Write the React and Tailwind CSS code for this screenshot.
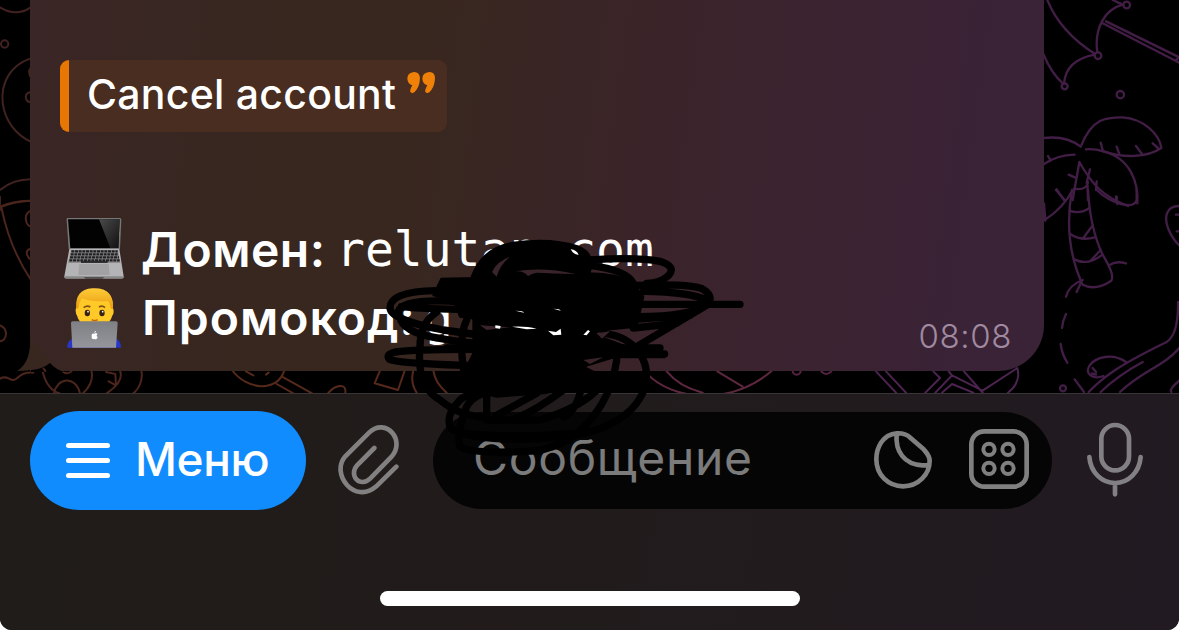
import React from "react";

function Wallpaper() {
  return (
    <svg className="absolute inset-0" width="1179" height="393" viewBox="0 0 1179 393" fill="none" strokeLinecap="round" strokeLinejoin="round">
      {/* left strip */}
      <g transform="scale(0.33333)" stroke="#40221f" strokeWidth="6">
        <path d="M0 22Q48 52 92 22" />
        <circle cx="14" cy="132" r="11" />
        <path d="M92 175C30 196 2 250 8 308C14 362 48 404 92 425M92 205Q84 212 90 228M92 276Q74 280 78 296Q82 308 92 306" />
        <path d="M0 570Q40 538 92 538M0 620Q40 602 92 602M0 590V630" />
      </g>
      <g transform="translate(0 200) scale(0.33333)" stroke="#4c251c" strokeWidth="6">
        <path d="M0 22Q40 4 92 2M4 22C18 90 46 170 92 238M92 32Q74 42 78 60Q80 76 92 80M92 146Q76 150 82 166Q86 176 92 178M0 376Q18 382 18 402Q16 422 0 424" />
        <path d="M0 536C20 524 26 540 40 540C56 538 56 516 100 518M126 500C130 540 150 572 178 580M274 512C282 540 264 568 248 580M162 580C170 534 226 524 240 580M184 512Q204 528 218 510M318 516L346 522L348 556L326 544M360 512C368 532 356 556 320 580M424 512C430 540 416 568 400 580" />
      </g>
      <g transform="translate(0 340) scale(0.33333)" stroke="#56291b" strokeWidth="6">
        <path d="M696 90C740 150 830 158 852 94M738 94L760 106M798 104L806 98M830 132L880 160M846 110L936 160M984 160C1004 136 1040 126 1036 158M1140 92L1124 130L1194 150L1214 92M1240 92Q1230 126 1250 158M1300 92Q1306 130 1340 158" />
      </g>
      {/* lower strip behind the bubble */}
      <g transform="translate(640 360) scale(0.33333)" strokeWidth="6">
        <path stroke="#5e2740" d="M20 40C100 124 270 136 394 34M80 34Q118 80 188 98M232 34L308 80" />
        <circle stroke="#572342" cx="470" cy="32" r="12" />
        <path stroke="#572342" d="M544 34Q558 50 574 34" />
        <path stroke="#4d2351" d="M708 34L768 98M738 34L798 98M880 34L900 54L856 98M926 34L936 46L886 98M972 34L1028 98M936 46L1028 92M906 98L936 72L1000 98M1028 92L1132 24Q1144 66 1104 98" />
      </g>
      {/* umbrella and palm crown */}
      <g transform="translate(1020 0) scale(0.33333)" stroke="#421d46" strokeWidth="7">
        <path d="M82 0Q120 94 222 160M232 156C222 86 254 28 308 14L278 0M224 164Q138 180 132 250M70 162Q94 220 130 252" />
        <path d="M248 70L478 188M258 64L478 172M478 172L468 180" />
        <circle cx="234" cy="167" r="10" /><circle cx="134" cy="259" r="9" />
        <circle cx="320" cy="15" r="10" /><circle cx="301" cy="284" r="11" />
        <path d="M182 440C218 350 262 352 308 352C370 356 418 402 424 444C380 474 310 474 250 454Q224 446 198 448M72 414Q138 406 182 440M72 492Q110 466 164 464M242 428L248 450M290 440L298 462M348 438L366 462M398 430L414 444M84 468L92 482" />
        <path d="M250 454C332 474 356 550 352 610M178 486C218 556 250 590 324 618M178 486L158 600M202 542L204 600M146 524L164 532M210 508L200 548M230 544L228 570M110 568L132 600M162 566Q198 572 204 548M290 590L292 612" />
      </g>
      {/* trunk and shore */}
      <g transform="translate(1020 190) scale(0.33333)" stroke="#421d46" strokeWidth="7">
        <path d="M156 0C140 90 144 190 188 284Q226 304 274 272C282 256 270 232 248 194C224 144 208 72 204 0" />
        <path d="M148 62Q180 74 208 54M150 132Q184 154 224 142M190 144L218 106M162 208Q204 228 244 196M210 214L242 180M74 90Q130 54 158 0M72 40L76 92M108 0L136 32M230 0C274 42 342 60 350 30V0M288 20L290 38" />
        <path d="M270 224Q290 212 318 220M188 270Q146 286 138 320M182 280L170 306M138 372Q128 392 126 414M122 462Q126 494 142 518M164 568L192 606" />
        <path d="M206 606C250 560 300 524 440 456Q476 432 474 336M242 606Q294 556 368 516M300 606C370 540 430 530 478 474M318 516C278 488 226 500 208 528C194 552 220 570 250 558M218 534L228 546M216 550L228 554" />
        <circle cx="129" cy="595" r="9" />
        <path d="M478 48C438 48 432 82 444 114Q456 146 478 166M478 572Q446 598 454 606M468 74H478M470 124H478" />
      </g>
    </svg>
  );
}

function Laptop() {
  return (
    <svg width="62" height="62" viewBox="0 0 186 186">
      <defs>
        <linearGradient id="shine" x1="0" y1="0" x2="1" y2="1">
          <stop offset="0" stopColor="#4a4a4a" /><stop offset="1" stopColor="#111" />
        </linearGradient>
      </defs>
      <path d="M14 3H170Q176 3 175 9L171 96H17L11 9Q10 3 14 3Z" fill="#777" />
      <path d="M15 7H170L166 93H22Z" fill="#020202" />
      <path d="M108 7H170L166 93H142Z" fill="url(#shine)" />
      <path d="M19 96H169L182 178Q183 184 176 184H10Q3 184 4 178Z" fill="#b4b4b6" />
      <path d="M24 99H165L172 138H15Z" fill="#8d8d8f" />
      <path d="M25 103H164M23 112H166M21 121H168M19 130H170" stroke="#202022" strokeWidth="7" strokeDasharray="9 2" />
      <path d="M54 135H134" stroke="#202022" strokeWidth="5" />
      <path d="M49 141H137L140 174H46Z" fill="#a2a2a4" />
      <path d="M4 178H182Q183 185 176 185H10Q3 185 4 178Z" fill="#898989" />
      <path d="M62 181H124L118 185H68Z" fill="#444" />
    </svg>
  );
}

function Technologist() {
  return (
    <svg width="62" height="62" viewBox="0 0 186 186">
      <defs>
        <linearGradient id="lid" x1="0" y1="0" x2="0" y2="1">
          <stop offset="0" stopColor="#7e8084" /><stop offset="1" stopColor="#94969b" />
        </linearGradient>
        <linearGradient id="hair" x1="0" y1="0" x2="0" y2="1">
          <stop offset="0" stopColor="#ffcc38" /><stop offset="1" stopColor="#e89a10" />
        </linearGradient>
      </defs>
      <path d="M12 182Q14 156 40 150H148Q174 156 174 182Z" fill="#2837c8" />
      <path d="M41 56Q38 10 95 6Q153 8 149 60Q156 78 147 88Q142 116 95 116Q48 116 43 88Q34 74 41 56Z" fill="#ffc927" />
      <path d="M40 66Q34 8 88 4Q154 0 150 66L143 64Q142 50 136 42Q86 46 56 34Q48 46 46 64Z" fill="url(#hair)" />
      <path d="M62 62Q72 54 82 60M108 60Q118 54 126 62" stroke="#805014" strokeWidth="5" fill="none" />
      <ellipse cx="73" cy="78" rx="8" ry="10" fill="#382015" />
      <ellipse cx="117" cy="78" rx="8" ry="10" fill="#382015" />
      <circle cx="75" cy="74" r="2.5" fill="#fff" /><circle cx="119" cy="74" r="2.5" fill="#fff" />
      <path d="M86 98Q95 104 104 98" stroke="#c96a08" strokeWidth="5" fill="none" />
      <path d="M29 103H158Q165 103 164 109L159 182H28L24 109Q24 103 29 103Z" fill="url(#lid)" />
      <path d="M95 140Q99 136 103 141Q98 146 104 151Q101 159 97 157Q94 155 90 157Q84 153 86 143Q89 138 95 140ZM94 138Q94 132 99 131Q99 136 94 138Z" fill="#fff" />
    </svg>
  );
}

function Scribble() {
  return (
    <svg className="pointer-events-none absolute left-[370px] top-[220px]" width="400" height="250" viewBox="0 0 1200 750" fill="none" stroke="#000" strokeWidth="22" strokeLinecap="round" strokeLinejoin="round">
      {/* dense core */}
      <path fill="#000" strokeWidth="6" d="M214 176L316 174Q336 110 390 84Q440 62 530 64Q600 68 640 96L660 160Q740 160 790 190L820 230L800 320L700 330L640 350L560 316L430 312L270 290L250 240L190 226Z" />
      <path fill="#000" strokeWidth="6" d="M310 290L420 310L560 320L640 320L690 350L780 384L840 392L760 404L640 440L700 470L820 484L640 505L520 520L380 530L300 510L290 440L310 400Z" />
      {/* upper loops */}
      <path d="M310 180Q340 90 430 76Q540 60 620 86Q680 110 640 180M660 120Q800 110 870 124Q920 140 896 166Q870 190 830 190M660 136Q770 150 790 190" />
      {/* wide horizontal ellipses */}
      <path d="M220 186H320Q600 176 800 196Q960 190 996 206Q1030 226 1016 250Q970 290 800 290M200 212Q60 214 60 264Q62 300 220 330Q430 360 560 370M820 214Q960 216 1010 240M1110 253H800Q500 236 280 246Q100 232 86 272Q84 330 180 350Q330 380 460 374M94 260Q220 272 400 266M1016 252L800 380M960 286L760 300M920 310L790 324" />
      <path d="M230 384L870 384M884 402Q600 398 460 390Q160 384 76 396Q46 402 58 418Q80 430 280 436H640M380 404H880" />
      {/* vertical loops */}
      <path d="M200 276Q150 310 150 380Q138 500 210 540Q270 590 350 592M290 300Q260 360 290 500M350 300V590M700 340C800 350 848 430 822 510C790 590 700 640 560 652C430 664 290 656 244 626Q222 590 270 540Q300 510 420 510" />
      <path d="M740 420C720 560 620 690 470 694Q300 702 270 680Q258 640 290 560Q310 520 380 510M350 600H510Q640 560 690 500M640 480Q620 580 580 590M500 520L380 586M580 510Q500 570 440 594M280 640Q450 656 600 640" />
      {/* openings left between the strokes */}
      <g stroke="none" fill="#39242a">
        <path d="M436 154Q520 140 616 162Q540 160 500 158Q486 160 474 168Q462 152 436 154Z" />
        <path d="M366 156Q380 124 420 110Q390 134 380 170Z" />
        <path d="M680 340L720 334L696 356ZM330 316L420 322L350 330ZM640 420L700 412L660 432ZM744 452L780 418L806 430Z" />
      </g>
      <g stroke="none" fill="#fff">
        <path d="M602 88Q620 90 626 104Q612 106 602 88ZM376 316L392 318L390 326L376 324ZM534 332L558 336L572 326L574 344L550 346ZM640 344L654 330L660 334L650 346Z" />
        <path d="M436 272Q462 272 462 278ZM550 266Q572 266 572 272ZM426 320Q470 318 500 326L470 328Z" />
      </g>
    </svg>
  );
}

function Bubble() {
  return (
    <section className="relative ml-[30px] h-[371px] w-[1014px] rounded-br-[46px] bg-[linear-gradient(98deg,#3a2626_0%,#37271f_24%,#38271f_38%,#3a2428_58%,#3b2331_78%,#3a2237_92%)] pl-[30px] pt-[60px] text-white">
      <svg className="absolute -left-[13px] bottom-0" width="50" height="34" viewBox="0 0 50 34">
        <path d="M13 0C14 16 10 28 0 34Q20 34 34 25L13 0Z" fill="#38271f" />
      </svg>
      <svg className="absolute -bottom-px left-[1px]" width="34" height="10" viewBox="0 0 34 10">
        <path d="M0 10V8Q12 7 19 1Q25 8 34 10Z" fill="#000" />
        <path d="M12 6Q15 9 14 10M33 10" stroke="#4c251c" strokeWidth="2" fill="none" />
      </svg>
      <blockquote className="flex h-[72px] w-[387px] overflow-hidden rounded-[9px] bg-[#492d20]">
        <span className="w-[9px] bg-[#e87603]" />
        <span className="ml-[18px] w-[320px] whitespace-nowrap font-['Inter',sans-serif] text-[41px] font-[550] leading-[69px] tracking-[0.25px]">Cancel account</span>
        <svg className="mt-[12px]" width="30" height="22" viewBox="0 0 90 66" fill="#ef8108">
          <path d="M21 0C36 0 41 12 38 28Q36 48 22 61Q15 66 10 60Q8 54 16 40Q2 36 1 20Q1 2 21 0ZM67 0C82 0 86 12 83 28Q81 48 67 61Q60 66 55 60Q53 54 61 40Q47 36 46 20Q46 2 67 0Z" />
        </svg>
      </blockquote>
      <div className="mt-[85px] flex h-[68px] items-start gap-[16px] pl-[3px]">
        <Laptop />
        <p className="-mt-px flex whitespace-nowrap font-['Inter',sans-serif] text-[48px] font-semibold leading-[67px]">
          <span className="w-[195px] tracking-[0.5px]">Домен:</span>
          <span className="font-['DejaVu_Sans_Mono',monospace] font-normal">relutan.com</span>
        </p>
      </div>
      <div className="flex h-[68px] items-start gap-[16px] pl-[3px] pt-[2px]">
        <Technologist />
        <p className="flex whitespace-nowrap pl-px font-['Inter',sans-serif] text-[48px] font-semibold leading-[62px]">
          <span className="w-[282px] tracking-[1px]">Промокод:</span>
          <span className="font-['DejaVu_Sans_Mono',monospace] font-normal">g</span>
        </p>
      </div>
      <time className="absolute bottom-[15px] right-[32px] font-['Inter',sans-serif] text-[33px] font-[350] leading-[40px] tracking-[0.6px] text-[#a08aa0]">08:08</time>
    </section>
  );
}

function Composer() {
  return (
    <footer className="flex h-[237px] flex-col items-center border-t border-[#393536] bg-[linear-gradient(100deg,#201c19_0%,#211c1b_45%,#211b1e_70%,#211a22_100%)] font-['Inter',sans-serif]">
      <div className="mt-[17px] flex h-[99px] w-full items-center pl-[30px]">
        <button className="flex h-[99px] w-[276px] items-center rounded-[50px] bg-[#108cff] pl-[36px] text-[46px] font-medium leading-none text-white">
          <span className="flex w-[44px] flex-col gap-[10px]">
            <span className="h-[5px] rounded-full bg-white" />
            <span className="h-[5px] rounded-full bg-white" />
            <span className="h-[5px] rounded-full bg-white" />
          </span>
          <span className="ml-[25px] whitespace-nowrap pb-[4px] tracking-[-0.4px]">Меню</span>
        </button>
        <svg className="mb-[2px] ml-[32px]" width="64" height="74" viewBox="0 0 192 222" fill="none" stroke="#828080" strokeWidth="14" strokeLinecap="round">
          <path d="M109 75L58 126C30 158 66 196 97 166L160 102C205 52 143 -18 94 28L22 100C-24 153 50 246 115 190L175 131" />
        </svg>
        <div className="mb-px ml-[31px] flex h-[97px] w-[619px] items-center rounded-full bg-[#060506] pl-[40px]">
          <span className="w-[400px] whitespace-nowrap pb-[4px] text-[48px] leading-none tracking-[0.7px] text-[#7b7b7b]">Сообщение</span>
          <svg className="mb-[3px]" width="60" height="60" viewBox="0 0 180 180" fill="none" stroke="#808080" strokeWidth="14" strokeLinecap="round" strokeLinejoin="round">
            <path d="M71 13C28 16 10 58 10 91C10 138 46 172 90 172C136 172 170 136 170 95C170 80 161 72 152 61L112 26C99 14 88 12 71 13ZM71 14C66 68 94 106 148 109H168" />
          </svg>
          <svg className="mb-[2px] ml-[36px]" width="60" height="60" viewBox="0 0 180 180" fill="none" stroke="#808080" strokeWidth="14">
            <rect x="7" y="7" width="166" height="166" rx="39" />
            <g strokeWidth="12">
              <circle cx="60" cy="61" r="17" /><circle cx="117" cy="61" r="17" />
              <circle cx="60" cy="118" r="17" /><circle cx="117" cy="118" r="17" />
            </g>
          </svg>
        </div>
        <svg className="mb-px ml-[34px]" width="58" height="76" viewBox="0 0 174 228" fill="none" stroke="#828083" strokeWidth="14" strokeLinecap="round">
          <rect x="46" y="9" width="83" height="136" rx="41.5" />
          <path d="M10 105C14 152 48 183 87 183S160 152 164 105M87 183V217" />
        </svg>
      </div>
      <div className="mt-[81px] h-[15px] w-[420px] rounded-full bg-white" />
    </footer>
  );
}

export default function App() {
  return (
    <div className="h-[630px] w-[1179px] bg-white">
      <main className="relative h-[630px] w-[1179px] overflow-hidden rounded-b-[12px] bg-black">
        <div className="relative h-[393px] overflow-hidden">
          <Wallpaper />
          <Bubble />
        </div>
        <Composer />
        <Scribble />
      </main>
    </div>
  );
}
